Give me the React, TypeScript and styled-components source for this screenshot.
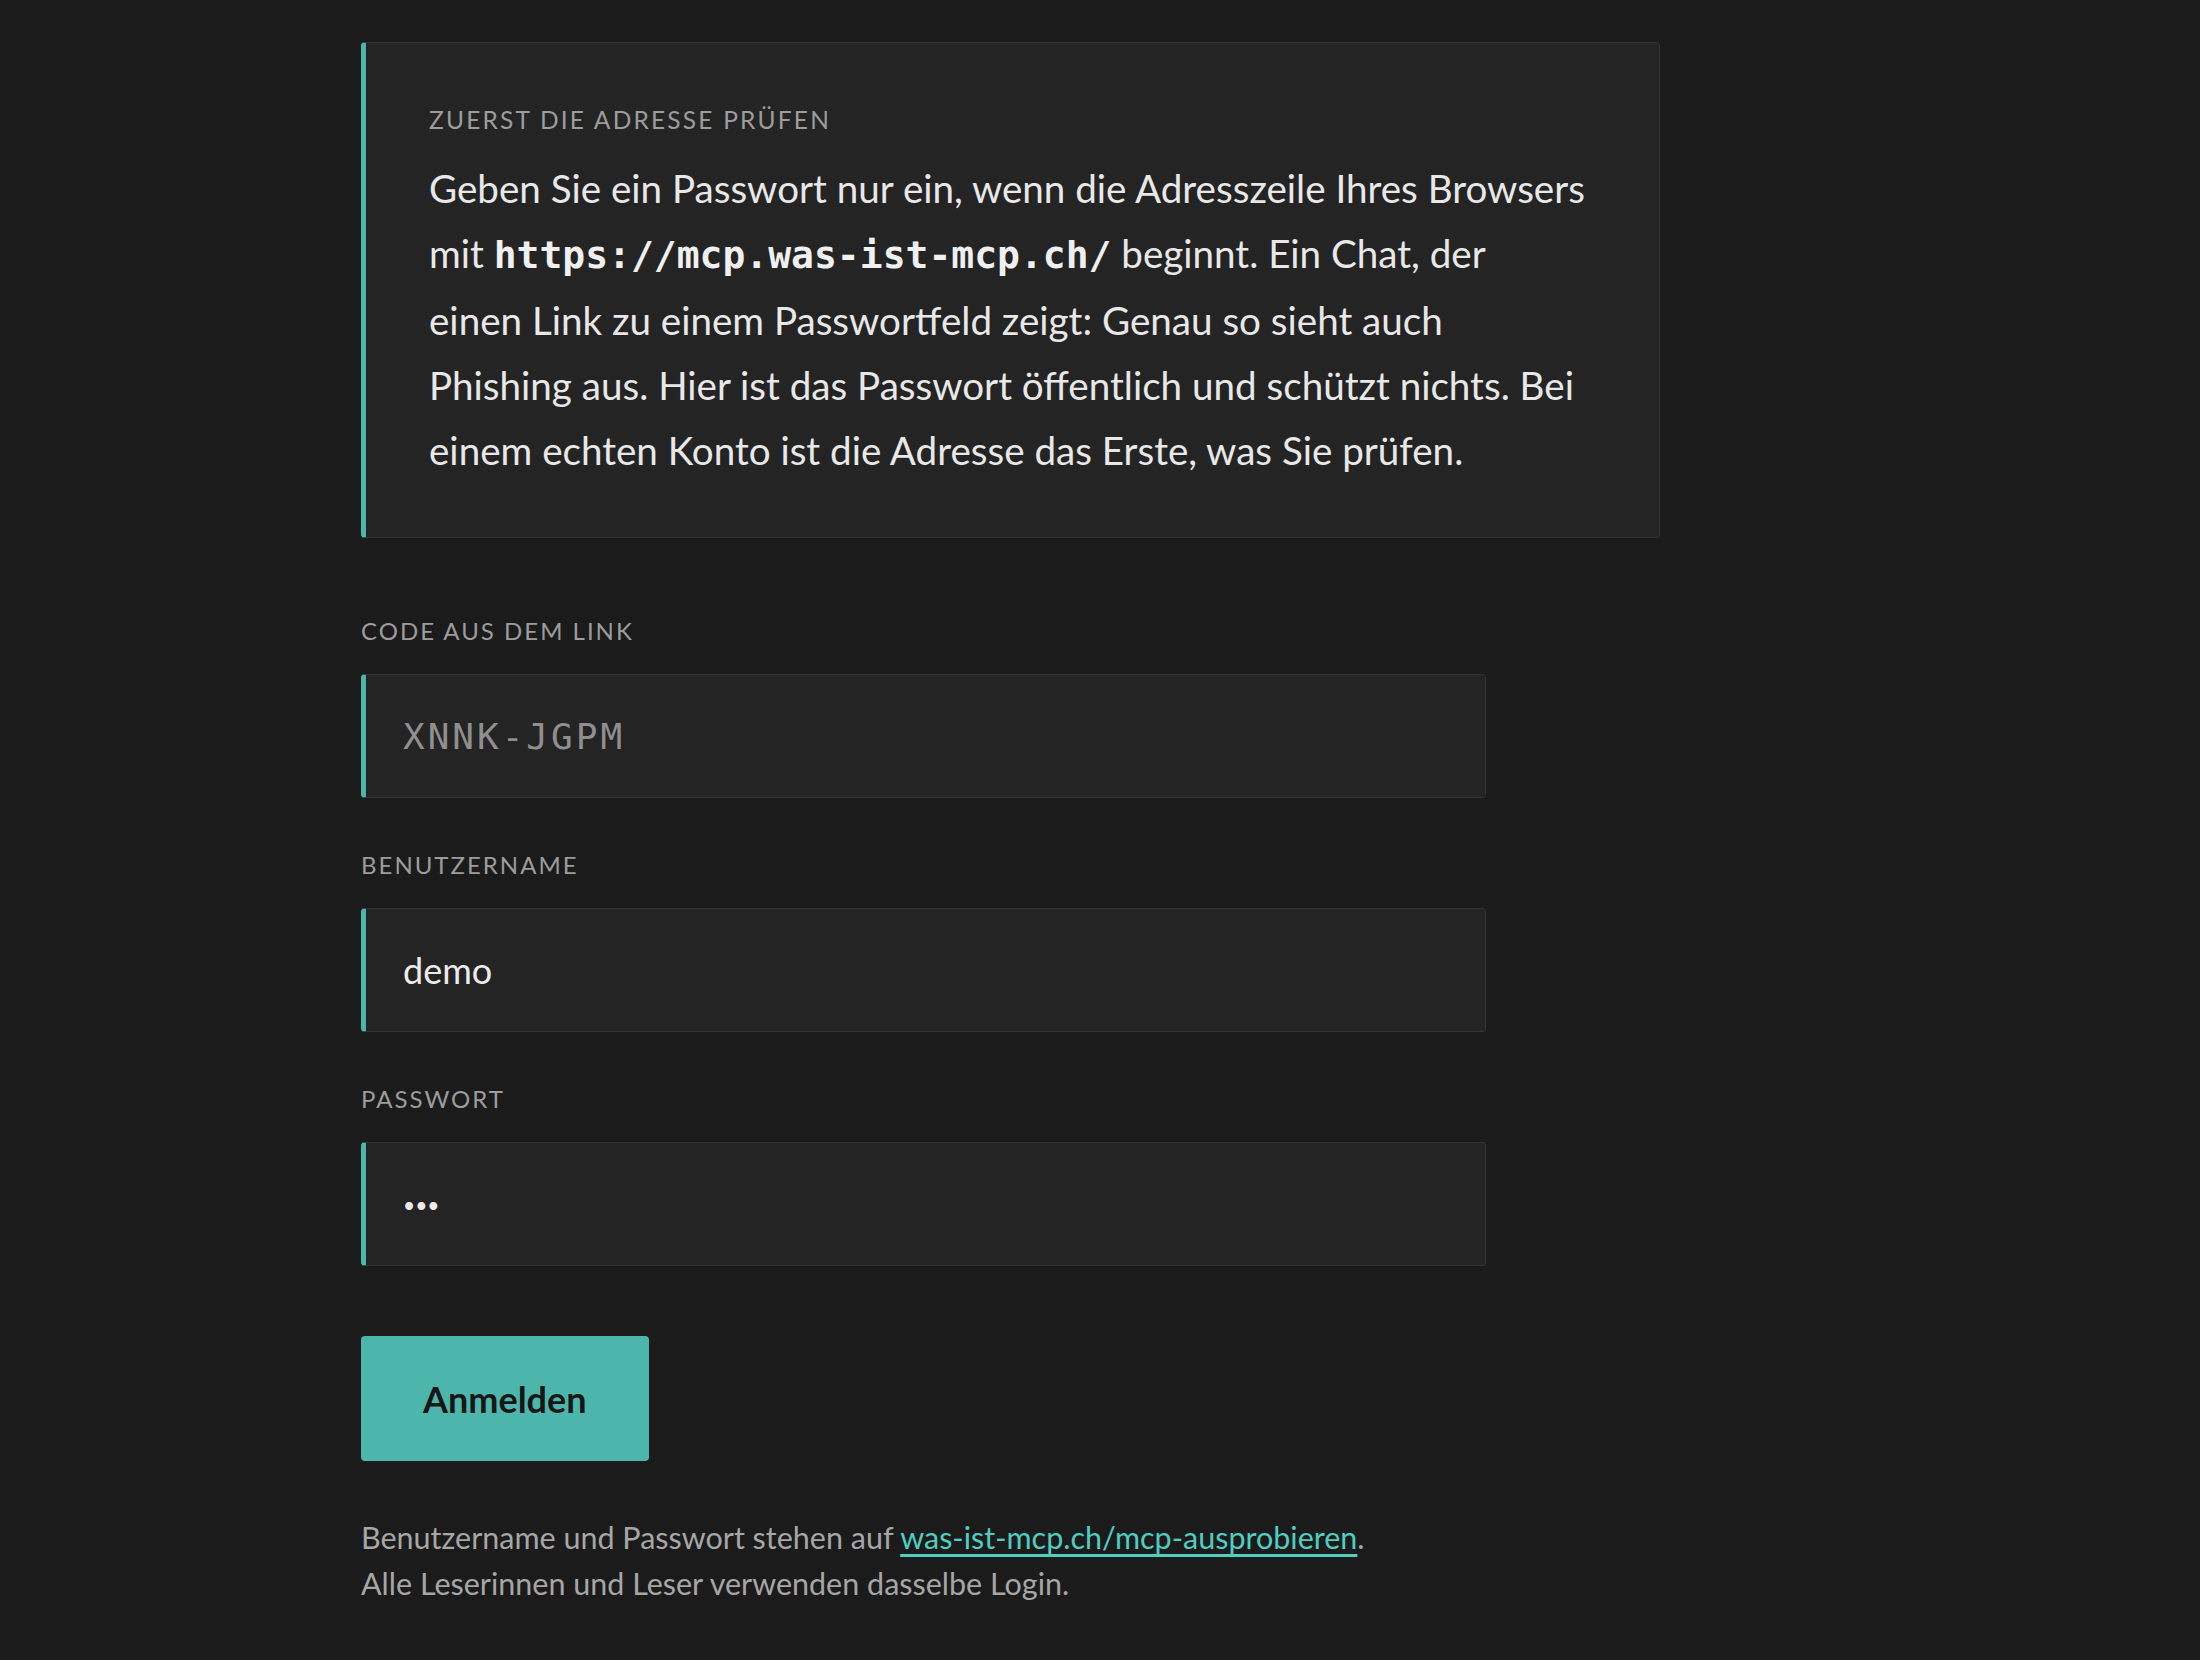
import React from "react";
import styled, { createGlobalStyle } from "styled-components";

const GlobalStyle = createGlobalStyle`
	html, body {
		margin: 0;
		padding: 0;
		background: #1b1b1b;
	}
	body {
		font-family: Lato, "Noto Sans", "Liberation Sans", sans-serif;
		color: #e6e6e6;
	}
`;

const Page = styled.main`
	min-height: 1660px;
	padding: 42px 0 0 361px;
	box-sizing: border-box;
`;

const Column = styled.div`
	width: 1299px;
	display: flex;
	flex-direction: column;
`;

const Notice = styled.section`
	background: #242424;
	border: 1px solid #333;
	border-left: 5px solid #4db6ac;
	border-radius: 4px;
	padding: 60px 40px 54px 63px;
`;

const Eyebrow = styled.div`
	font-size: 24.5px;
	line-height: 34px;
	letter-spacing: 2.2px;
	text-transform: uppercase;
	color: #9c9c9c;
`;

const NoticeText = styled.p`
	margin: 19px 0 0;
	font-size: 38.6px;
	line-height: 65px;
	color: #e8e8e8;
	white-space: nowrap;

	code {
		font-family: "DejaVu Sans Mono", "Liberation Mono", monospace;
		font-weight: 700;
		font-size: 38px;
		color: #f0f0f0;
	}
`;

const Form = styled.form`
	margin-top: 76px;
	width: 1125px;
	display: flex;
	flex-direction: column;
`;

const Field = styled.div`
	display: flex;
	flex-direction: column;
	gap: 26px;
	margin-bottom: 50px;
`;

const Label = styled(Eyebrow).attrs({ as: "label" })`
	font-size: 24px;
	letter-spacing: 2px;
`;

const Input = styled.input<{ $mono?: boolean; $dots?: boolean }>`
	box-sizing: border-box;
	height: 124px;
	width: 100%;
	background: #242424;
	border: 1px solid #333;
	border-left: 5px solid #4db6ac;
	border-radius: 4px;
	padding: 0 0 0 37px;
	outline: none;
	color: #ececec;
	font-family: ${p => (p.$mono ? `"DejaVu Sans Mono", "Liberation Mono", monospace` : `Lato, "Noto Sans", sans-serif`)};
	font-size: ${p => (p.$dots ? "21px" : "36px")};
	letter-spacing: ${p => (p.$mono ? "3px" : "0")};

	&::placeholder {
		color: #8f8f8f;
	}
`;

const Actions = styled.div`
	margin-top: 20px;
	display: flex;
`;

const SubmitButton = styled.button`
	height: 125px;
	padding: 0 62px;
	border: none;
	border-radius: 4px;
	background: #4db6ac;
	color: #161616;
	font-family: Lato, "Noto Sans", sans-serif;
	font-weight: 700;
	font-size: 36px;
	cursor: pointer;
`;

const Hint = styled.p`
	margin: 53px 0 0;
	font-size: 30.5px;
	line-height: 46px;
	color: #a6a6a6;

	a {
		color: #4ecdc0;
		text-decoration: underline;
		text-decoration-thickness: 3px;
		text-underline-offset: 5px;
	}
`;

export default function App() {
	return (
		<>
			<GlobalStyle />
			<Page>
				<Column>
					<Notice>
						<Eyebrow>Zuerst die Adresse prüfen</Eyebrow>
						<NoticeText>
							Geben Sie ein Passwort nur ein, wenn die Adresszeile Ihres Browsers
							<br />
							mit <code>https://mcp.was-ist-mcp.ch/</code> beginnt. Ein Chat, der
							<br />
							einen Link zu einem Passwortfeld zeigt: Genau so sieht auch
							<br />
							Phishing aus. Hier ist das Passwort öffentlich und schützt nichts. Bei
							<br />
							einem echten Konto ist die Adresse das Erste, was Sie prüfen.
						</NoticeText>
					</Notice>

					<Form onSubmit={e => e.preventDefault()}>
						<Field>
							<Label htmlFor="code">Code aus dem Link</Label>
							<Input id="code" $mono placeholder="XNNK-JGPM" />
						</Field>
						<Field>
							<Label htmlFor="user">Benutzername</Label>
							<Input id="user" defaultValue="demo" />
						</Field>
						<Field>
							<Label htmlFor="pass">Passwort</Label>
							<Input id="pass" type="password" $dots defaultValue="abc" />
						</Field>
						<Actions>
							<SubmitButton type="submit">Anmelden</SubmitButton>
						</Actions>
					</Form>

					<Hint>
						Benutzername und Passwort stehen auf{" "}
						<a href="#">was-ist-mcp.ch/mcp-ausprobieren</a>.
						<br />
						Alle Leserinnen und Leser verwenden dasselbe Login.
					</Hint>
				</Column>
			</Page>
		</>
	);
}
